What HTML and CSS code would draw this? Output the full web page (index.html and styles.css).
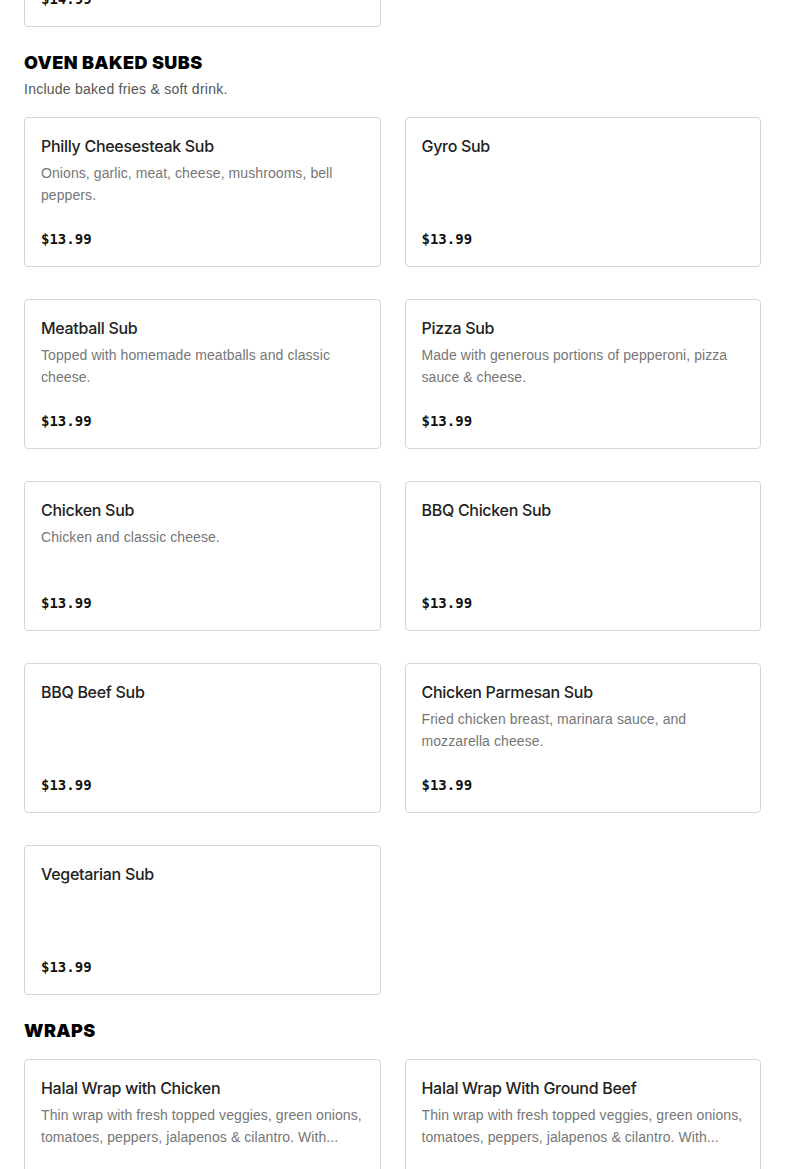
FILE: index.html
```html
<!DOCTYPE html>
<html lang="en">
<head>
<meta charset="utf-8">
<title>Menu</title>
<link rel="stylesheet" href="styles.css">
</head>
<body>
<main class="menu">
  <section class="section section-first">
    <div class="grid">
      <div class="card">
        <h3 class="card-title">Kids Meal</h3>
        <p class="card-desc">Served with fries and a soft drink.</p>
        <p class="card-price">$14.99</p>
      </div>
    </div>
  </section>

  <section class="section">
    <h2 class="section-title">OVEN BAKED SUBS</h2>
    <p class="section-sub">Include baked fries &amp; soft drink.</p>
    <div class="grid">
      <div class="card">
        <h3 class="card-title">Philly Cheesesteak Sub</h3>
        <p class="card-desc">Onions, garlic, meat, cheese, mushrooms, bell peppers.</p>
        <p class="card-price">$13.99</p>
      </div>
      <div class="card">
        <h3 class="card-title">Gyro Sub</h3>
        <p class="card-desc"></p>
        <p class="card-price">$13.99</p>
      </div>
      <div class="card">
        <h3 class="card-title">Meatball Sub</h3>
        <p class="card-desc">Topped with homemade meatballs and classic cheese.</p>
        <p class="card-price">$13.99</p>
      </div>
      <div class="card">
        <h3 class="card-title">Pizza Sub</h3>
        <p class="card-desc">Made with generous portions of pepperoni, pizza sauce &amp; cheese.</p>
        <p class="card-price">$13.99</p>
      </div>
      <div class="card">
        <h3 class="card-title">Chicken Sub</h3>
        <p class="card-desc">Chicken and classic cheese.</p>
        <p class="card-price">$13.99</p>
      </div>
      <div class="card">
        <h3 class="card-title">BBQ Chicken Sub</h3>
        <p class="card-desc"></p>
        <p class="card-price">$13.99</p>
      </div>
      <div class="card">
        <h3 class="card-title">BBQ Beef Sub</h3>
        <p class="card-desc"></p>
        <p class="card-price">$13.99</p>
      </div>
      <div class="card">
        <h3 class="card-title">Chicken Parmesan Sub</h3>
        <p class="card-desc">Fried chicken breast, marinara sauce, and mozzarella cheese.</p>
        <p class="card-price">$13.99</p>
      </div>
      <div class="card">
        <h3 class="card-title">Vegetarian Sub</h3>
        <p class="card-desc"></p>
        <p class="card-price">$13.99</p>
      </div>
    </div>
  </section>

  <section class="section">
    <h2 class="section-title">WRAPS</h2>
    <div class="grid">
      <div class="card">
        <h3 class="card-title">Halal Wrap with Chicken</h3>
        <p class="card-desc">Thin wrap with fresh topped veggies, green onions, tomatoes, peppers, jalapenos &amp; cilantro. With...</p>
        <p class="card-price">$12.99</p>
      </div>
      <div class="card">
        <h3 class="card-title">Halal Wrap With Ground Beef</h3>
        <p class="card-desc">Thin wrap with fresh topped veggies, green onions, tomatoes, peppers, jalapenos &amp; cilantro. With...</p>
        <p class="card-price">$12.99</p>
      </div>
    </div>
  </section>
</main>
</body>
</html>
```

FILE: styles.css
```css
* { box-sizing: border-box; }

html, body {
  margin: 0;
  padding: 0;
  background: #ffffff;
}

body {
  font-family: "Liberation Sans", Arial, sans-serif;
  color: #222222;
  overflow: hidden;
}

.menu {
  padding: 0 24px;
}

.section {
  margin-top: 24px;
}

.section-first {
  margin-top: -123px;
}

.section-title {
  margin: 0;
  font-family: "Inter", "Liberation Sans", sans-serif;
  font-weight: 900;
  font-size: 18px;
  line-height: 24px;
  letter-spacing: 0.4px;
  color: #000000;
}

.section-sub {
  margin: 3px 0 0;
  padding-bottom: 1px;
  font-size: 14px;
  line-height: 22px;
  letter-spacing: 0.25px;
  color: #555555;
}

.grid {
  margin-top: 16px;
  display: grid;
  grid-template-columns: 1fr 1fr;
  column-gap: 24px;
  row-gap: 32px;
}

.section-first .grid {
  margin-top: 0;
}

.card {
  border: 1px solid #d6d6d6;
  border-radius: 4px;
  padding: 16px 16px 15px;
  display: flex;
  flex-direction: column;
  min-height: 150px;
}

.card-title {
  margin: 0;
  font-family: "Inter", "Liberation Sans", sans-serif;
  font-size: 16px;
  font-weight: 500;
  line-height: 24px;
  letter-spacing: -0.3px;
  color: #222222;
}

.card-desc {
  margin: 4px 0 0;
  font-size: 14px;
  line-height: 22px;
  letter-spacing: 0.08px;
  height: 44px;
  color: #767676;
  display: -webkit-box;
  -webkit-line-clamp: 2;
  -webkit-box-orient: vertical;
  overflow: hidden;
}

.card-price {
  margin: 21px 0 0;
  font-family: "DejaVu Sans Mono", "Liberation Mono", monospace;
  font-weight: 700;
  font-size: 14px;
  line-height: 24px;
  color: #111111;
}
```
